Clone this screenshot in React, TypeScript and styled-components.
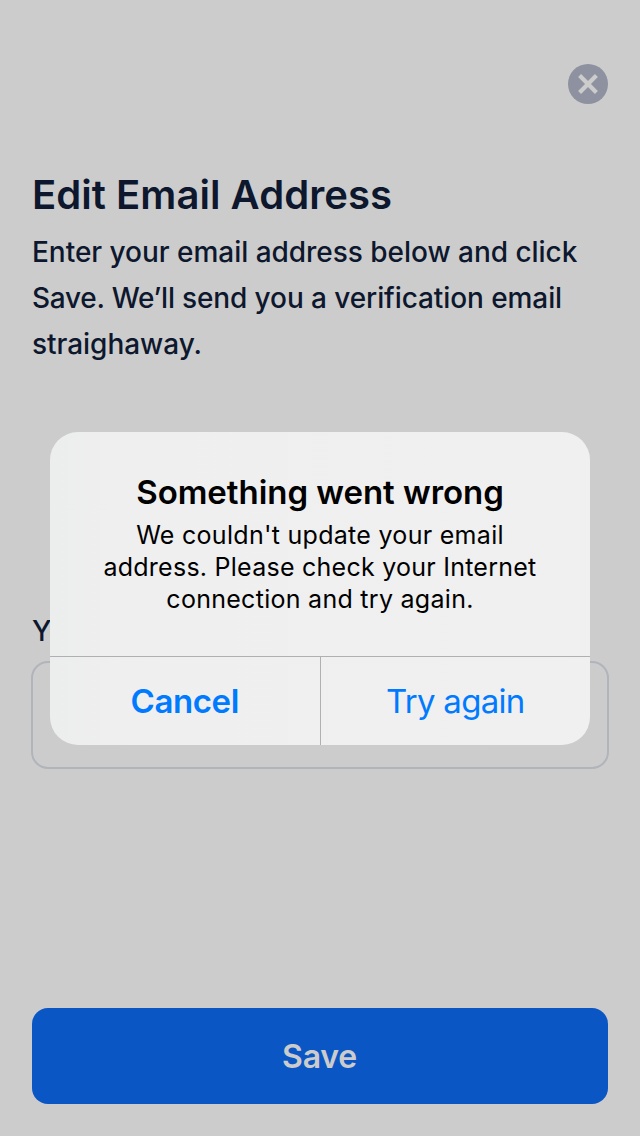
import React from "react";
import styled, { createGlobalStyle } from "styled-components";

const Global = createGlobalStyle`
  * { box-sizing: border-box; }
  body { margin: 0; background: #ccc; font-family: Inter, sans-serif; }
  h1, h2, p { margin: 0; }
  button { font-family: inherit; border: 0; padding: 0; margin: 0; background: none; }
`;

const Screen = styled.main`
  position: relative;
  display: flex;
  flex-direction: column;
  width: 640px;
  height: 1136px;
  padding: 64px 32px 32px;
  overflow: hidden;
  background: #cccccc;
  color: #0d172d;
`;

const CloseButton = styled.button`
  display: flex;
  align-self: flex-end;
  width: 40px;
  height: 40px;
`;

const Title = styled.h1`
  margin-top: 66px;
  font-size: 40px;
  line-height: 50px;
  font-weight: 600;
  letter-spacing: 0.05px;
  white-space: nowrap;
`;

const Intro = styled.p`
  margin-top: 9px;
  font-size: 28px;
  line-height: 46px;
  font-weight: 500;
  white-space: nowrap;
`;

const Field = styled.label`
  display: flex;
  flex-direction: column;
  margin: 241px -1px 0;
`;

const FieldLabel = styled.span`
  padding-left: 1px;
  font-size: 28px;
  line-height: 46px;
  font-weight: 500;
`;

const Input = styled.input`
  height: 108px;
  margin-top: 7px;
  border: 2px solid #b1b4bb;
  border-radius: 17px;
  background: transparent;
`;

const SaveButton = styled.button`
  height: 96px;
  margin-top: auto;
  padding-right: 1px;
  border-radius: 16px;
  background: #0a56c5;
  color: #cccccc;
  font-size: 32px;
  font-weight: 600;
  letter-spacing: -0.2px;
`;

const Dialog = styled.section`
  position: absolute;
  left: 50px;
  top: 432px;
  display: flex;
  flex-direction: column;
  width: 540px;
  height: 313px;
  border-radius: 28px;
  overflow: hidden;
  background: linear-gradient(90deg, #eceded, #efefef 12%, #f0f0f0);
  color: #000;
  text-align: center;
`;

const Message = styled.div`
  height: 224px;
  padding-top: 40px;
`;

const DialogTitle = styled.h2`
  font-size: 33px;
  line-height: 40px;
  font-weight: 600;
  letter-spacing: -0.04px;
  white-space: nowrap;
`;

const DialogText = styled.p`
  margin-top: 7px;
  font-size: 25px;
  line-height: 32px;
  white-space: nowrap;
`;

const Actions = styled.div`
  display: flex;
  flex: 1;
  border-top: 1px solid #b0b0b2;
`;

const Action = styled.button<{ $strong?: boolean }>`
  flex: 1;
  color: #007aff;
  font-size: 33px;
  font-weight: ${({ $strong }) => ($strong ? 600 : 400)};
  letter-spacing: ${({ $strong }) => ($strong ? "-0.4px" : "-0.7px")};
  & + & { border-left: 1px solid #b0b0b2; }
`;

const Line = styled.span<{ $spacing?: number }>`
  display: block;
  letter-spacing: ${({ $spacing = 0 }) => $spacing}px;
`;

const Tight = styled.span`
  letter-spacing: -0.26px;
`;

export default function App() {
  return (
    <Screen>
      <Global />
      <CloseButton aria-label="Close">
        <svg width="40" height="40" viewBox="0 0 40 40">
          <circle cx="20" cy="20" r="20" fill="#8e92a0" />
          <path d="M11.6 11.6 28.4 28.4M28.4 11.6 11.6 28.4" stroke="#ccc" strokeWidth="4.2" />
        </svg>
      </CloseButton>
      <Title>Edit Email Address</Title>
      <Intro>
        <Line $spacing={-0.03}>Enter your email address below and click</Line>
        <Line $spacing={-0.09}><Tight>Save. We’ll </Tight>send you a verification email</Line>
        <Line $spacing={-0.03}>straighaway.</Line>
      </Intro>
      <Field>
        <FieldLabel>Your email</FieldLabel>
        <Input />
      </Field>
      <SaveButton>Save</SaveButton>
      <Dialog role="alertdialog">
        <Message>
          <DialogTitle>Something went wrong</DialogTitle>
          <DialogText>
            <Line $spacing={0.29}>We couldn't update your email</Line>
            <Line $spacing={0.25}>address. Please check your Internet</Line>
            <Line $spacing={0.28}>connection and try again.</Line>
          </DialogText>
        </Message>
        <Actions>
          <Action $strong>Cancel</Action>
          <Action>Try again</Action>
        </Actions>
      </Dialog>
    </Screen>
  );
}
